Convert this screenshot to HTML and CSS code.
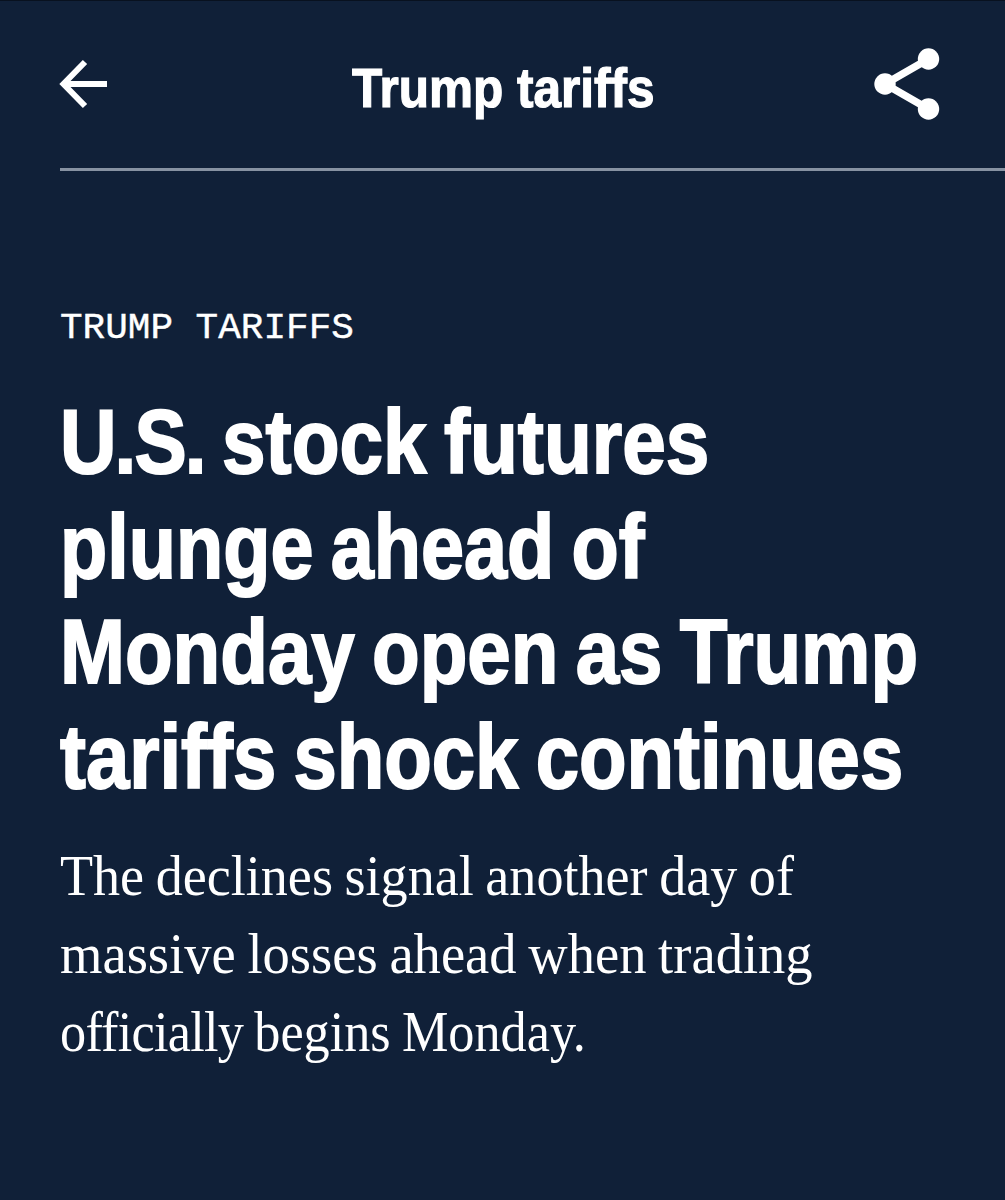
FILE: index.html
```html
<!DOCTYPE html>
<html lang="en">
<head>
<meta charset="utf-8">
<title>Trump tariffs</title>
<link rel="stylesheet" href="styles.css">
</head>
<body>
<header class="topbar">
  <svg class="back" viewBox="0 0 50 50" role="img" aria-label="Back"><path d="M26 3 4.500 25l21.500 22M5 25h43"/></svg>
  <div class="title"><span class="fit fit-title">Trump tariffs</span></div>
  <svg class="share" viewBox="0 0 66 74" role="img" aria-label="Share"><path d="M54.500 12 11 37l43.500 25"/><circle cx="54.500" cy="12" r="10.700"/><circle cx="11" cy="37" r="10.700"/><circle cx="54.500" cy="62" r="10.700"/></svg>
</header>
<main class="article">
  <div class="kicker"><span class="fit fit-kicker">TRUMP TARIFFS</span></div>
  <h1 class="headline">
    <span class="fit h-1"><span class="abbr">U.S.</span> stock futures</span>
    <span class="fit h-2">plunge ahead of</span>
    <span class="fit h-3">Monday open as Trump</span>
    <span class="fit h-4">tariffs shock continues</span>
  </h1>
  <p class="dek">
    <span class="fit d-1">The declines signal another day of</span>
    <span class="fit d-2">massive losses ahead when trading</span>
    <span class="fit d-3"><span class="tight">officially</span> begins Monday.</span>
  </p>
</main>
</body>
</html>
```
FILE: styles.css
```css
* { box-sizing: border-box; }
body {
  margin: 0;
  height: 1200px;
  overflow: hidden;
  background: #102038;
  color: #fff;
  border-top: 1px solid #08111f;
}
.fit { display: block; width: max-content; white-space: nowrap; transform-origin: 0 50%; }
.topbar {
  display: flex;
  justify-content: space-between;
  height: 170px;
  margin-left: 60px;
  padding: 46px 65px 0 0;
  border-bottom: 3px solid #8792a2;
}
.back { width: 50px; height: 50px; margin-top: 12px; margin-left: -1px; fill: none; stroke: #fff; stroke-width: 6; }
.share { width: 66px; height: 74px; fill: #fff; stroke: #fff; }
.share path { fill: none; stroke-width: 7.5; }
.share circle { stroke: none; }
.title {
  width: 302px;
  margin-left: 23px;
  padding-top: 9px;
  font: bold 55px/64px "Liberation Sans", Arial, sans-serif;
  -webkit-text-stroke: 1.2px #fff;
}
.fit-title { transform: scaleX(.9); }
.article { padding: 129px 0 0 60px; }
.kicker { height: 56px; font: 37px/56px "Liberation Mono", "Courier New", monospace; -webkit-text-stroke: .4px #fff; }
.fit-kicker { transform: scaleX(1.018); }
.headline {
  margin: 33px 0 0;
  font: bold 91px/105px "Liberation Sans", Arial, sans-serif;
  word-spacing: -5px;
  -webkit-text-stroke: 2px #fff;
}
.abbr { letter-spacing: -2.2px; }
.h-1 { transform: scaleX(.86); }
.h-2 { transform: scaleX(.85); }
.h-3 { transform: scaleX(.857); }
.h-4 { transform: scaleX(.855); }
.dek {
  margin: 28px 0 0;
  font: 56px/78px "Liberation Serif", "Times New Roman", serif;
  word-spacing: -2px;
}
.tight { letter-spacing: -.8px; }
.d-1 { transform: scaleX(.966); }
.d-2 { transform: scaleX(.974); }
.d-3 { transform: scaleX(.933); }
```
